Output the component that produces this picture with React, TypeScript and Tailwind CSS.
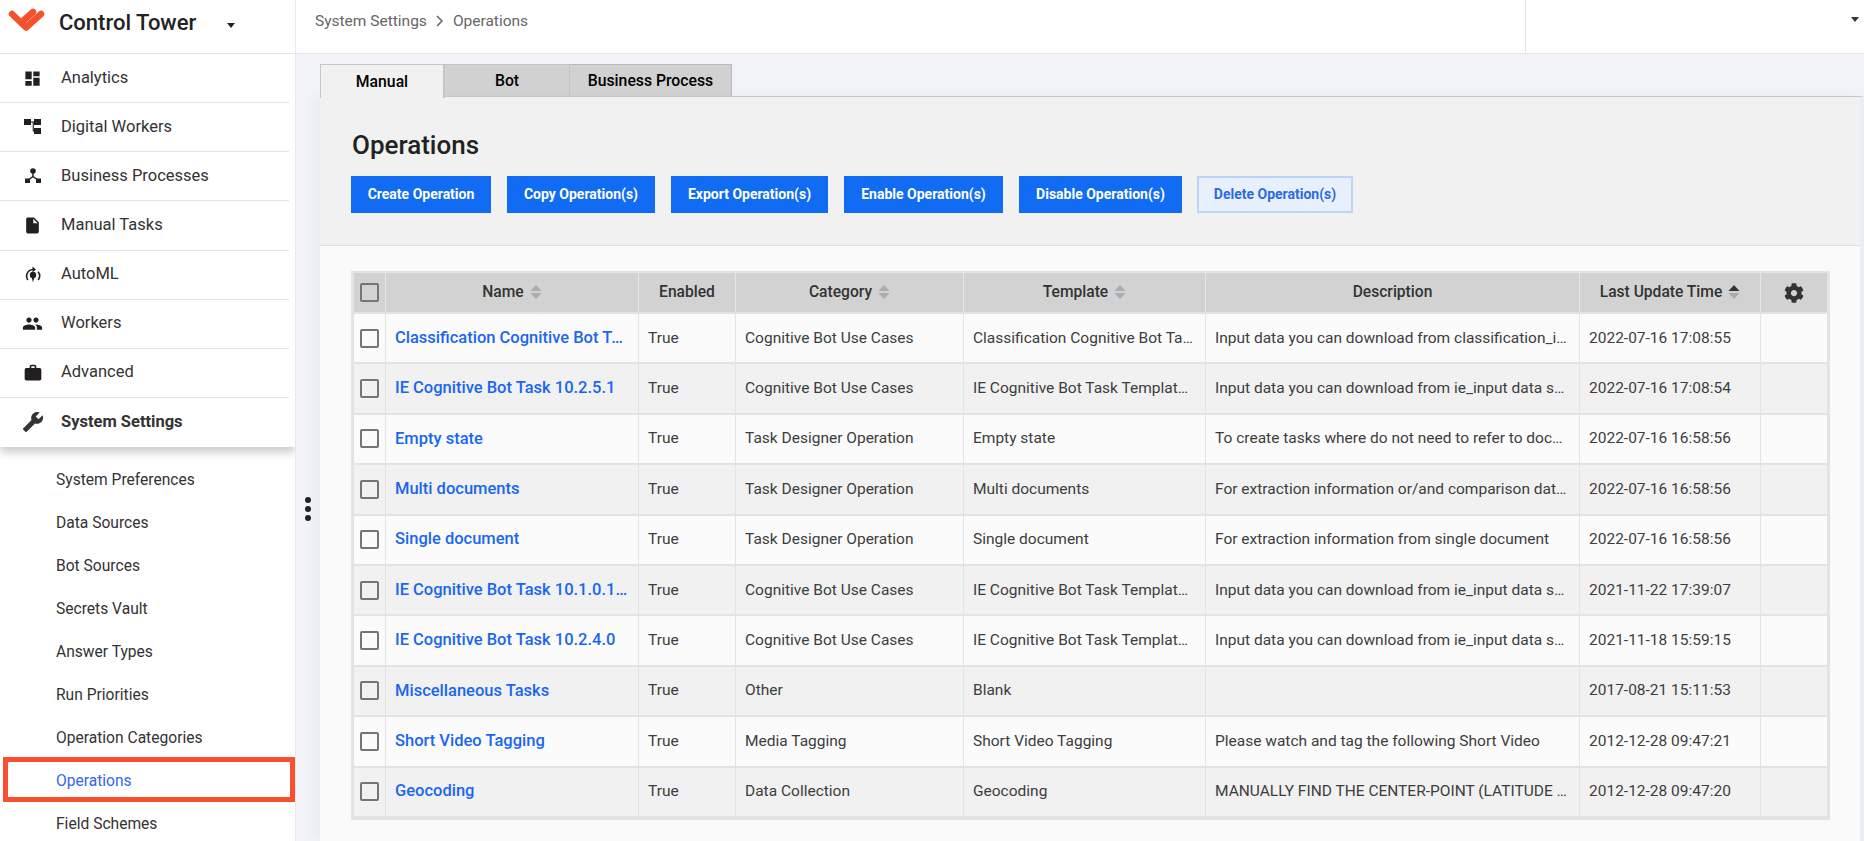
import React from "react";
import { MdDashboard, MdInsertDriveFile, MdPeople, MdWork, MdBuild } from "react-icons/md";
import { FaCog } from "react-icons/fa";

const DigitalIcon = () => (
  <svg width="18" height="16" viewBox="0 0 18 16" fill="#231f20">
    <rect x="0" y="0" width="7" height="6" />
    <rect x="10" y="0" width="7" height="6" />
    <rect x="10" y="9" width="7" height="6" />
    <path d="M6 2.500h5v1H9.800v8H11v1H8.700V3.500H6z" />
  </svg>
);

const ProcessIcon = () => (
  <svg width="18" height="16" viewBox="0 0 18 16" fill="#231f20">
    <circle cx="9" cy="3" r="2.800" />
    <rect x="1" y="10.500" width="5" height="4.500" />
    <rect x="12" y="10.500" width="5" height="4.500" />
    <path d="M9 4v5.500M9 8.500L3.500 12.500M9 8.500l5.500 4" stroke="#231f20" strokeWidth="1.500" fill="none" />
  </svg>
);

const AutoMlIcon = () => (
  <svg width="18" height="20" viewBox="0 0 18 20" fill="none">
    <circle cx="9" cy="10" r="3.200" fill="#231f20" />
    <path d="M7.700 12.500L9 17.500l1.300-5z" fill="#231f20" />
    <path d="M3.800 15C1.200 11 3 5 9 4.500M14.200 15c2-2.800 1.800-6-0.200-8.300" stroke="#231f20" strokeWidth="1.600" />
    <path d="M8.500 1.500l3.500 3-3.500 2.800z" fill="#231f20" />
  </svg>
);

const nav: [string, React.ReactNode][] = [
  ["Analytics", <MdDashboard size={19} color="#231f20" />],
  ["Digital Workers", <DigitalIcon />],
  ["Business Processes", <ProcessIcon />],
  ["Manual Tasks", <MdInsertDriveFile size={19} color="#231f20" />],
  ["AutoML", <AutoMlIcon />],
  ["Workers", <MdPeople size={21} color="#231f20" />],
  ["Advanced", <MdWork size={20} color="#231f20" />],
];

const sub = [
  "System Preferences",
  "Data Sources",
  "Bot Sources",
  "Secrets Vault",
  "Answer Types",
  "Run Priorities",
  "Operation Categories",
  "Operations",
  "Field Schemes",
];

const buttons = [
  ["Create Operation", "w-[140px]"],
  ["Copy Operation(s)", "w-[148px]"],
  ["Export Operation(s)", "w-[157px]"],
  ["Enable Operation(s)", "w-[159px]"],
  ["Disable Operation(s)", "w-[163px]"],
];

const ieDesc = "Input data you can download from ie_input data set and upload it";

const rows = [
  ["Classification Cognitive Bot Task 10.2.5.1", "Cognitive Bot Use Cases", "Classification Cognitive Bot Task Template", "Input data you can download from classification_input data set", "2022-07-16 17:08:55"],
  ["IE Cognitive Bot Task 10.2.5.1", "Cognitive Bot Use Cases", "IE Cognitive Bot Task Template 10.2.5.1", ieDesc, "2022-07-16 17:08:54"],
  ["Empty state", "Task Designer Operation", "Empty state", "To create tasks where do not need to refer to documents", "2022-07-16 16:58:56"],
  ["Multi documents", "Task Designer Operation", "Multi documents", "For extraction information or/and comparison data from documents", "2022-07-16 16:58:56"],
  ["Single document", "Task Designer Operation", "Single document", "For extraction information from single document", "2022-07-16 16:58:56"],
  ["IE Cognitive Bot Task 10.1.0.1 Legacy", "Cognitive Bot Use Cases", "IE Cognitive Bot Task Template 10.1.0.1", ieDesc, "2021-11-22 17:39:07"],
  ["IE Cognitive Bot Task 10.2.4.0", "Cognitive Bot Use Cases", "IE Cognitive Bot Task Template 10.2.4.0", ieDesc, "2021-11-18 15:59:15"],
  ["Miscellaneous Tasks", "Other", "Blank", "", "2017-08-21 15:11:53"],
  ["Short Video Tagging", "Media Tagging", "Short Video Tagging", "Please watch and tag the following Short Video", "2012-12-28 09:47:21"],
  ["Geocoding", "Data Collection", "Geocoding", "MANUALLY FIND THE CENTER-POINT (LATITUDE AND LONGITUDE)", "2012-12-28 09:47:20"],
];

const Sort = ({ active }: { active?: boolean }) => (
  <svg width="12" height="16" viewBox="0 0 12 16" className="ml-[6px] shrink-0">
    <path d="M6 1L11.500 7H.5z" fill={active ? "#333333" : "#a9adb2"} />
    <path d="M6 15L.5 9h11z" fill="#a9adb2" />
  </svg>
);

const Check = ({ header }: { header?: boolean }) => (
  <span className={`block mx-auto w-[19px] h-[19px] rounded-[2px] border-2 border-[#757575] ${header ? "bg-[#d2d2d2]" : "bg-transparent"}`} />
);

const th = "border-r border-b-2 border-r-[#e6e6e6] border-b-[#e3e3e3] font-medium text-[15.6px] text-[#333333] p-0";
const cell = "border-r border-b-2 border-[#e3e3e3] px-[9px] truncate";
const td = `${cell} text-[15.5px] text-[#3d3d3d] font-normal`;

export default function App() {
  return (
    <div className="flex w-full h-[841px] overflow-hidden bg-[#f1f3f8] [font-family:Roboto,sans-serif]">
      <aside className="w-[296px] shrink-0 h-full bg-white border-r border-[#e6e8ec] flex flex-col overflow-hidden">
        <div className="relative z-10 bg-white shadow-[0_5px_9px_rgba(0,0,0,0.22)]">
          <div className="h-[54px] border-b border-[#e3e3e3] flex items-center pl-[8px]">
            <svg width="40" height="28" viewBox="0 0 40 28" className="-mt-[16px] shrink-0">
              <path d="M4 9L18 22.500L33 9" stroke="#f4512c" strokeWidth="6.500" strokeLinecap="round" strokeLinejoin="round" fill="none" />
              <path d="M15 16L25 7" stroke="#f4512c" strokeWidth="6.500" strokeLinecap="round" fill="none" />
            </svg>
            <span className="ml-[11px] text-[22px] leading-none text-[#222222] font-medium -mt-[8px] w-[133px] whitespace-nowrap">Control Tower</span>
            <span className="ml-[35px] -mt-[2px] w-0 h-0 border-x-[4.500px] border-x-transparent border-t-[5px] border-t-[#222222]" />
          </div>
          {nav.map(([label, icon]) => (
            <div key={label} className="h-[49.14px] mr-[6px] border-b border-[#e3e3e3] flex items-center text-[16.5px] text-[#333333]">
              <span className="w-[61px] flex justify-center pl-[4px]">{icon}</span>
              <span>{label}</span>
            </div>
          ))}
          <div className="h-[49px] flex items-center text-[16.5px] font-bold text-[#333333]">
            <span className="w-[61px] flex justify-center pl-[4px]">
              <MdBuild size={22} color="#333333" className="-scale-x-100" />
            </span>
            <span>System Settings</span>
          </div>
        </div>
        <div className="pt-[12px] flex flex-col">
          {sub.map((s) => (
            <div key={s} className={`relative h-[43px] shrink-0 flex items-center pl-[56px] text-[15.6px] ${s === "Operations" ? "text-[#3366ee]" : "text-[#333333]"}`}>
              {s}
              {s === "Operations" && (
                <span className="absolute left-[3px] right-0 -top-[3px] h-[45px] border-[5px] border-[#f9502f]" />
              )}
            </div>
          ))}
        </div>
      </aside>

      <main className="flex-1 min-w-0 flex flex-col relative">
        <header className="h-[54px] shrink-0 bg-white border-b border-[#e3e5e9] flex">
          <div className="w-[1230px] border-r border-[#e3e5e9] pl-[19px] pt-[10px] flex items-start text-[15.5px] text-[#666666]">
            <span>System Settings</span>
            <svg width="10" height="12" viewBox="0 0 10 12" className="mx-[8px] mt-[5px]">
              <path d="M2 1l5 5-5 5" stroke="#666666" strokeWidth="1.500" fill="none" />
            </svg>
            <span>Operations</span>
          </div>
          <div className="flex-1 flex justify-end pr-[5px] pt-[17px]">
            <span className="w-0 h-0 border-x-[4.500px] border-x-transparent border-t-[5px] border-t-[#333333]" />
          </div>
        </header>

        <span className="absolute left-[9px] top-[497px] flex flex-col gap-[3px]">
          <i className="block w-[6px] h-[6px] rounded-full bg-[#222222]" />
          <i className="block w-[6px] h-[6px] rounded-full bg-[#222222]" />
          <i className="block w-[6px] h-[6px] rounded-full bg-[#222222]" />
        </span>

        <div className="ml-[24px] pt-[10px] flex-1 flex flex-col min-h-0">
          <div className="flex h-[32px] shrink-0 text-[15.75px] font-medium text-black">
            <div className="w-[125px] h-[34px] relative z-10 bg-[#f1f1f1] border border-b-0 border-[#c6c6c6] border-r-2 flex items-center justify-center">Manual</div>
            <div className="w-[125px] h-[33px] bg-[#d1d1d1] border-t border-r border-[#c4c4c4] flex items-center justify-center">Bot</div>
            <div className="w-[162px] h-[33px] bg-[#d1d1d1] border-t border-r border-[#b9b9b9] flex items-center justify-center">Business Process</div>
          </div>
          <div className="flex-1 min-h-0 flex flex-col border-t border-[#c6c6c6] border-r-4 border-r-[#ecedf1] shadow-[-6px_0_10px_rgba(0,0,0,0.03)]">
            <div className="h-[149px] shrink-0 bg-[#f1f1f1] border-b border-[#dedede] pl-[31px] pt-[29px]">
              <h1 className="text-[26px] leading-[38px] font-medium text-[#222222] pl-px">Operations</h1>
              <div className="flex mt-[12px]">
                {buttons.map(([b, w]) => (
                  <button key={b} className={`${w} h-[37px] mr-[16px] bg-[#126bf3] text-white text-[14px] font-bold flex items-center justify-center`}>
                    {b}
                  </button>
                ))}
                <button className="w-[156px] h-[37px] -ml-px bg-[#e9f0fd] border-2 border-[#bcd4f9] text-[#2a6ce0] text-[14px] font-bold flex items-center justify-center">
                  Delete Operation(s)
                </button>
              </div>
            </div>
            <div className="flex-1 bg-[#fafafa] pl-[31px] pt-[25px]">
              <div className="w-[1479px] border-2 border-l-[3px] border-r-[3px] border-[#e3e3e3]">
                <table className="w-[1474px] table-fixed border-separate border-spacing-0">
                  <colgroup>
                    <col className="w-[32px]" />
                    <col className="w-[253px]" />
                    <col className="w-[97px]" />
                    <col className="w-[228px]" />
                    <col className="w-[242px]" />
                    <col className="w-[374px]" />
                    <col className="w-[181px]" />
                    <col className="w-[67px]" />
                  </colgroup>
                  <thead>
                    <tr className="h-[41px] bg-[#d2d2d2]">
                      <th className={th}><Check header /></th>
                      {["Name", "Enabled", "Category", "Template", "Description", "Last Update Time"].map((h) => (
                        <th key={h} className={th}>
                          <span className="flex items-center justify-center">
                            {h}
                            {(h === "Name" || h === "Category" || h === "Template") && <Sort />}
                            {h === "Last Update Time" && <Sort active />}
                          </span>
                        </th>
                      ))}
                      <th className={th}>
                        <FaCog size={20} color="#333333" className="mx-auto" />
                      </th>
                    </tr>
                  </thead>
                  <tbody>
                    {rows.map((r, i) => (
                      <tr key={r[0]} className={`h-[50.4px] ${i % 2 === 0 ? "bg-[#fbfbfb]" : "bg-[#f1f1f1]"}`}>
                        <td className="border-r border-b-2 border-[#e3e3e3] p-0"><Check /></td>
                        <td className={`${cell} text-[16.5px] text-[#1a66f2] font-medium`}>{r[0]}</td>
                        <td className={td}>True</td>
                        <td className={td}>{r[1]}</td>
                        <td className={td}>{r[2]}</td>
                        <td className={td}>{r[3]}</td>
                        <td className={td}>{r[4]}</td>
                        <td className={td}></td>
                      </tr>
                    ))}
                  </tbody>
                </table>
              </div>
            </div>
          </div>
        </div>
      </main>
    </div>
  );
}
